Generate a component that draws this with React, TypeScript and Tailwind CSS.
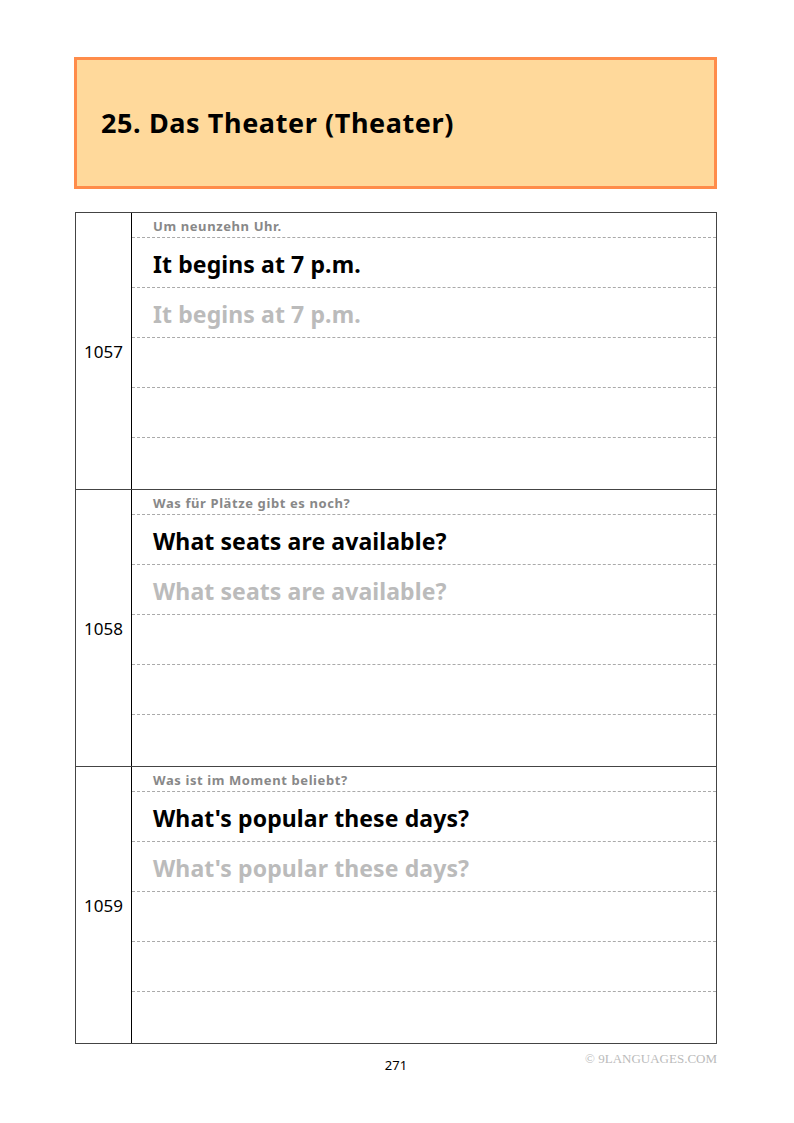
const entries = [
  { id: 1057, de: "Um neunzehn Uhr.", en: "It begins at 7 p.m." },
  { id: 1058, de: "Was für Plätze gibt es noch?", en: "What seats are available?" },
  { id: 1059, de: "Was ist im Moment beliebt?", en: "What's popular these days?" },
]

function Block({ id, de, en }: { id: number; de: string; en: string }) {
  return (
    <div className="flex border-b border-[#444] h-[277px]">
      <div className="w-[56px] border-r border-black flex items-center pl-[8px] pt-[2px] text-[17px] text-black">
        {id}
      </div>
      <div className="flex-1 flex flex-col">
        <div className="h-[25px] border-b border-dashed border-[#aaa] pl-[21px] pt-[3px] flex items-center text-[13px] tracking-[0.6px] font-bold text-[#888]">
          {de}
        </div>
        <div className="h-[50px] border-b border-dashed border-[#aaa] pl-[21px] pt-[3px] flex items-center text-[23px] tracking-[0.1px] font-bold text-black">
          {en}
        </div>
        <div className="h-[50px] border-b border-dashed border-[#aaa] pl-[21px] pt-[3px] flex items-center text-[23px] tracking-[0.1px] font-bold text-[#bbb]">
          {en}
        </div>
        <div className="h-[50px] border-b border-dashed border-[#aaa]"></div>
        <div className="h-[50px] border-b border-dashed border-[#aaa]"></div>
        <div className="flex-1"></div>
      </div>
    </div>
  )
}

export default function App() {
  return (
    <div className="w-[794px] h-[1123px] bg-white relative" style={{ fontFamily: '"Noto Sans", "Open Sans", sans-serif' }}>
      <div className="pt-[57px] pl-[74px]">
        <div className="w-[643px] h-[132px] border-[3px] border-[#ff8c4a] bg-[#ffd99b] flex items-center pl-[24px]">
          <h1 className="text-[27px] tracking-[0.6px] font-bold text-black">25. Das Theater (Theater)</h1>
        </div>
      </div>
      <div className="mt-[23px] ml-[75px] w-[642px] border-t border-l border-r border-[#444]">
        {entries.map((e) => (
          <Block key={e.id} {...e} />
        ))}
      </div>
      <div className="relative ml-[75px] w-[642px] h-[40px]">
        <div className="absolute left-0 right-0 top-[12px] text-center text-[13px] text-black">271</div>
        <div className="absolute right-0 top-[5px] text-[13px] text-[#bbb]" style={{ fontFamily: '"Liberation Serif", serif' }}>
          © 9LANGUAGES.COM
        </div>
      </div>
    </div>
  )
}
